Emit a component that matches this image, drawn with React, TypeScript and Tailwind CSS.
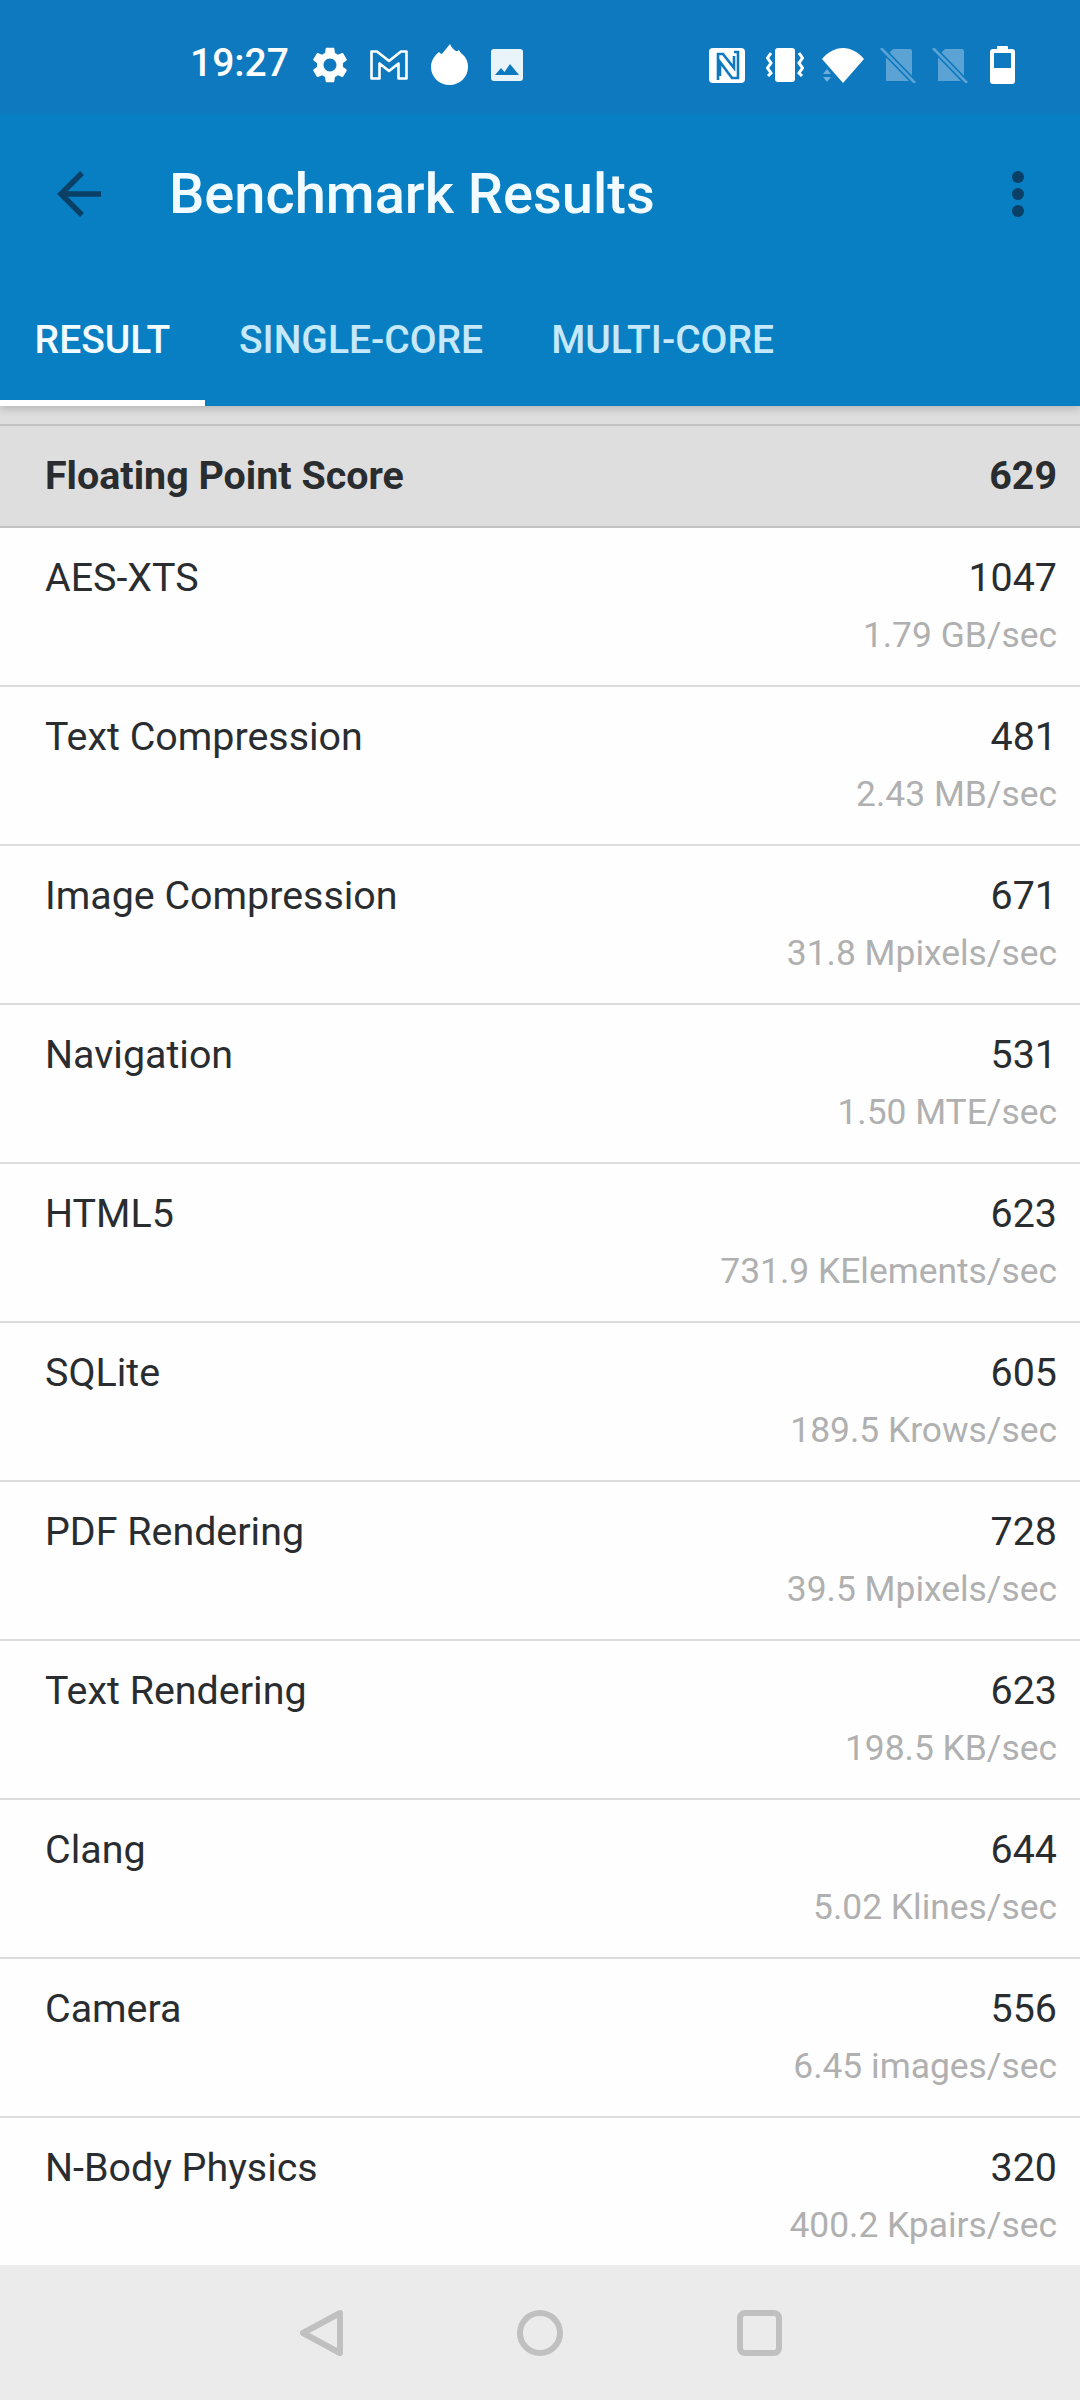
const rows = [
  { name: "AES-XTS", score: "1047", rate: "1.79 GB/sec" },
  { name: "Text Compression", score: "481", rate: "2.43 MB/sec" },
  { name: "Image Compression", score: "671", rate: "31.8 Mpixels/sec" },
  { name: "Navigation", score: "531", rate: "1.50 MTE/sec" },
  { name: "HTML5", score: "623", rate: "731.9 KElements/sec" },
  { name: "SQLite", score: "605", rate: "189.5 Krows/sec" },
  { name: "PDF Rendering", score: "728", rate: "39.5 Mpixels/sec" },
  { name: "Text Rendering", score: "623", rate: "198.5 KB/sec" },
  { name: "Clang", score: "644", rate: "5.02 Klines/sec" },
  { name: "Camera", score: "556", rate: "6.45 images/sec" },
  { name: "N-Body Physics", score: "320", rate: "400.2 Kpairs/sec" },
];

function StatusLeftIcons() {
  return (
    <div className="flex items-center gap-[23px] ml-[24px]">
      {/* gear */}
      <svg width="34" height="36" viewBox="2.6 2 18.8 20" fill="white">
        <path d="M19.14 12.94c.04-.3.06-.61.06-.94 0-.32-.02-.64-.07-.94l2.03-1.58c.18-.14.23-.41.12-.61l-1.92-3.32c-.12-.22-.37-.29-.59-.22l-2.39.96c-.5-.38-1.03-.7-1.62-.94l-.36-2.54c-.04-.24-.24-.41-.48-.41h-3.84c-.24 0-.43.17-.47.41l-.36 2.54c-.59.24-1.13.57-1.62.94l-2.39-.96c-.22-.08-.47 0-.59.22L2.74 8.87c-.12.21-.08.47.12.61l2.03 1.58c-.05.3-.09.63-.09.94s.02.64.07.94l-2.03 1.58c-.18.14-.23.41-.12.61l1.92 3.32c.12.22.37.29.59.22l2.39-.96c.5.38 1.03.7 1.62.94l.36 2.54c.05.24.24.41.48.41h3.84c.24 0 .44-.17.47-.41l.36-2.54c.59-.24 1.13-.56 1.62-.94l2.39.96c.22.08.47 0 .59-.22l1.92-3.32c.12-.22.07-.47-.12-.61l-2.01-1.58zM12 15.6c-1.98 0-3.6-1.62-3.6-3.6s1.62-3.6 3.6-3.6 3.6 1.62 3.6 3.6-1.62 3.6-3.6 3.6z" />
      </svg>
      {/* mail M */}
      <svg width="38" height="30" viewBox="0 0 38 30" fill="none" stroke="white" strokeWidth="2.6" strokeLinejoin="round">
        <path d="M1.5 1.5 H7 L19 11 L31 1.5 H36.5 V28.5 H28.5 V13.5 L19 21 L9.5 13.5 V28.5 H1.5 Z" />
      </svg>
      {/* flame */}
      <svg width="37" height="41" viewBox="0 0 37 41" fill="white" className="-mt-[1px]">
        <path d="M19 0 C20 3 23 6 25 7 C26 7 27 7 28 6 C29 8 30 9 31 10 C35 13 37 18 37 23 C37 33 29 41 18.5 41 C8 41 0 33 0 23 C0 17 3 12 8 8 C9 9 10 10 11 10 C13 7 16 4 19 0Z" />
      </svg>
      {/* picture */}
      <svg width="32" height="32" viewBox="0 0 32 32">
        <rect width="32" height="32" rx="3" fill="#e8f3fa" />
        <path d="M4 26 L10 19 L13.5 23 L19 15 L28 26Z" fill="#0e79be" />
      </svg>
    </div>
  );
}

function StatusRightIcons() {
  return (
    <div className="ml-auto flex items-center">
      {/* nfc */}
      <svg width="36" height="35" viewBox="0 0 36 35">
        <rect width="36" height="35" rx="4" fill="white" />
        <path d="M9 32 V6 H14 L25 20 V8 M25 4 H29 V30 H23 L11 14 V28" fill="none" stroke="#0e79be" strokeWidth="2.6" />
      </svg>
      {/* vibrate */}
      <svg width="38" height="34" viewBox="0 0 38 34" className="ml-[21px]" fill="none" stroke="white" strokeWidth="3">
        <rect x="9" width="20" height="34" rx="3" fill="white" stroke="none" />
        <path d="M5 5 L1.5 10 L5 15 L1.5 20 L5 25 L2 28" />
        <path d="M33 5 L36.5 10 L33 15 L36.5 20 L33 25 L36 28" />
      </svg>
      {/* wifi */}
      <svg width="42" height="35" viewBox="0 0 42 35" className="ml-[18px]">
        <path d="M0 11 C6 4 13 0 21 0 C29 0 36 4 42 11 L21 35 Z" fill="white" />
        <path d="M1 26 L5 21 L9 26Z M1 29 L9 29 L5 34Z" fill="#6fb0dc" />
      </svg>
      {/* empty sim slots */}
      {[0, 1].map((i) => (
        <svg key={i} width="36" height="35" viewBox="0 0 36 35" className="ml-[16px]">
          <path d="M13 1 H30 a2 2 0 0 1 2 2 V33 H6 V8 Z" fill="#5ba3d5" />
          <path d="M1 0 L35 35" stroke="#0e79be" strokeWidth="6" />
          <path d="M1 0 L35 35" stroke="#5ba3d5" strokeWidth="2.6" />
        </svg>
      ))}
      {/* battery */}
      <svg width="25" height="38" viewBox="0 0 25 38" className="ml-[22px]">
        <rect x="7" width="11" height="6" rx="1" fill="white" />
        <rect y="3" width="25" height="35" rx="3" fill="white" />
        <rect x="4" y="7" width="17" height="15" fill="#0e79be" />
      </svg>
    </div>
  );
}

export default function App() {
  return (
    <div className="h-[2400px] w-[1080px] overflow-hidden flex flex-col bg-[#fefefe] font-['Roboto',sans-serif]">
      <div className="relative z-10 shrink-0 shadow-[0_3px_8px_rgba(0,0,0,0.18)]">
        <div className="h-[114px] bg-[#0e79be] flex items-center text-white pl-[190px] pr-[65px] pt-[16px]">
          <span className="text-[39px] font-medium leading-none -mt-[3px]">19:27</span>
          <StatusLeftIcons />
          <StatusRightIcons />
        </div>
        <div className="bg-[#087fc2]">
          <div className="h-[160px] flex items-center pl-[57px] pr-[56px]">
            <svg width="44" height="46" viewBox="0 0 44 46" fill="none" stroke="#0a3f66" strokeWidth="5.5">
              <path d="M44 23 H4 M25 2 L4 23 L25 44" />
            </svg>
            <span className="ml-[68px] text-[#f2fbff] text-[56px] font-medium leading-none">Benchmark Results</span>
            <div className="ml-auto flex flex-col gap-[5px]">
              <div className="w-[12px] h-[12px] rounded-full bg-[#0a3f66]" />
              <div className="w-[12px] h-[12px] rounded-full bg-[#0a3f66]" />
              <div className="w-[12px] h-[12px] rounded-full bg-[#0a3f66]" />
            </div>
          </div>
          <div className="flex h-[132px] text-[39px] font-medium">
            <div className="w-[205px] pt-[6px] border-b-[6px] border-white text-[#f2fbff] flex items-center justify-center">RESULT</div>
            <div className="ml-[34px] flex items-center text-[#c5e8fb]">SINGLE-CORE</div>
            <div className="ml-[68px] flex items-center text-[#c5e8fb]">MULTI-CORE</div>
          </div>
        </div>
      </div>
      <div className="shrink-0 bg-[#dedede]">
        <div className="h-[18px]" />
        <div className="h-[104px] border-y-2 border-[#c2c2c2] flex items-center justify-between pl-[45px] pr-[23px] text-[39.4px] font-bold text-[#2a2d30]">
          <span>Floating Point Score</span>
          <span>629</span>
        </div>
      </div>
      <div className="flex-1 overflow-hidden">
        {rows.map((row) => (
          <div key={row.name} className="h-[159px] border-b-2 border-[#dcdcdc] flex justify-between pl-[45px] pr-[23px] pt-[27px] text-[39.4px] leading-[46px] text-[#2a2d30]">
            <span>{row.name}</span>
            <div className="flex flex-col items-end">
              <span>{row.score}</span>
              <span className="text-[35.4px] leading-[42px] text-[#b0b0b0] mt-[13px]">{row.rate}</span>
            </div>
          </div>
        ))}
      </div>
      <div className="h-[135px] shrink-0 bg-[#ebebeb] flex items-center pl-[300px] gap-[174px]">
        <svg width="43" height="46" viewBox="0 0 43 46" fill="none" stroke="#c0c0c0" strokeWidth="6" strokeLinejoin="round">
          <path d="M40 3 L3 23 L40 43 Z" />
        </svg>
        <svg width="46" height="46" viewBox="0 0 46 46" fill="none" stroke="#c0c0c0" strokeWidth="6">
          <circle cx="23" cy="23" r="20" />
        </svg>
        <svg width="45" height="46" viewBox="0 0 45 46" fill="none" stroke="#c0c0c0" strokeWidth="6">
          <rect x="3" y="3" width="39" height="40" rx="5" />
        </svg>
      </div>
    </div>
  );
}
